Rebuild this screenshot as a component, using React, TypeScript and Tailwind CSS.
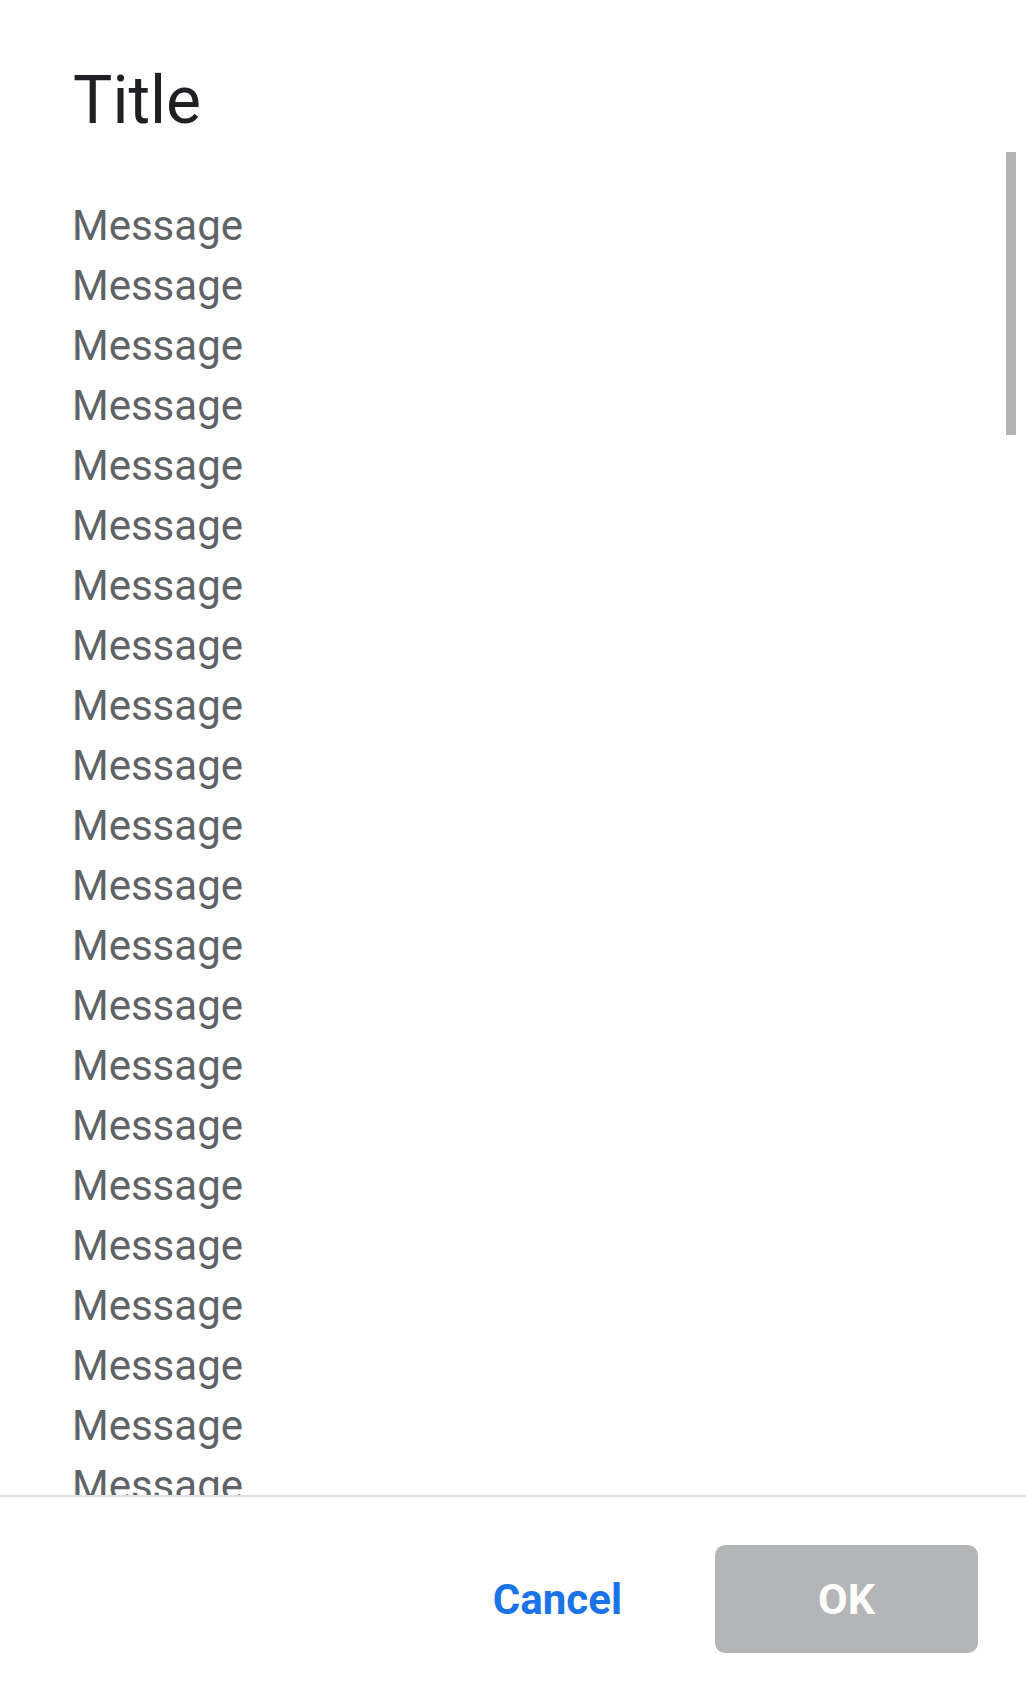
import React from "react";

export default function App() {
  const lines = Array.from({ length: 22 }, (_, i) => i);
  return (
    <div className="w-full h-[1701px] bg-white flex flex-col overflow-hidden" style={{ fontFamily: "Roboto, 'Noto Sans', sans-serif" }}>
      <div className="pl-[73px] pt-[61px] h-[152px] shrink-0">
        <h1 className="text-[66px] leading-[80px] text-[#202124] font-normal">Title</h1>
      </div>
      <div className="relative flex-1 overflow-hidden">
        <div className="pl-[72px] pt-[44px]">
          {lines.map((i) => (
            <div key={i} className="text-[42px] leading-[60px] text-[#5f6368]">Message</div>
          ))}
        </div>
        <div className="absolute right-[10px] top-0 w-[10px] h-[283px] bg-[#b3b3b3]" />
      </div>
      <div className="h-[2px] bg-[#e0e0e0] shrink-0" />
      <div className="h-[204px] shrink-0 flex items-center justify-end pr-[48px]">
        <button className="text-[42px] leading-[50px] mt-[2px] font-bold text-[#1a73e8] mr-[93px]">Cancel</button>
        <button className="w-[263px] h-[108px] rounded-[10px] bg-[#b4b5b6] text-white text-[43px] font-bold">OK</button>
      </div>
    </div>
  );
}
